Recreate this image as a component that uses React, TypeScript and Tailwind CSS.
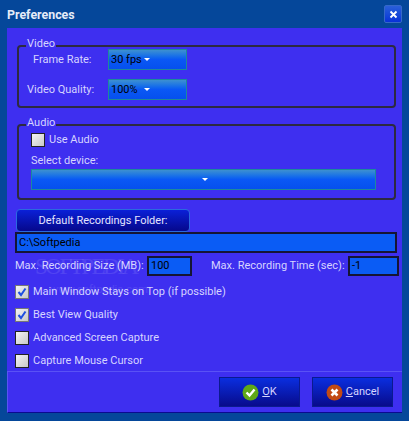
const labelFont = "[font-family:Roboto,'Liberation_Sans',sans-serif] text-[11px] leading-[14px]";

function Group({ title, className, children }: { title: string; className: string; children: React.ReactNode }) {
  return (
    <div className={`relative ml-[10px] w-[379px] rounded-[4px] border-2 border-[#2d2a40] ${className}`}>
      <span className="absolute left-[7px] top-[-10px] bg-[#3e2ff0] px-[1px] text-[#d6d4ff]">{title}</span>
      {children}
    </div>
  );
}

function Combo({ value, className }: { value?: string; className: string }) {
  return (
    <div className={`flex h-[21px] items-center border border-[#1c8a9c] bg-gradient-to-b from-[#3d8fd0] via-[#0a58f5] to-[#0550ee] pl-[2px] text-black ${className}`}>
      {value && <span className="w-[33px]">{value}</span>}
      <span className="h-0 w-0 border-x-[3px] border-t-[3px] border-x-transparent border-t-white" />
    </div>
  );
}

function Check({ checked, label }: { checked?: boolean; label: string }) {
  return (
    <div className="flex h-[14px] items-center gap-[4px] text-[#d6d4ff]">
      <span className={`flex h-[14px] w-[14px] items-center justify-center border bg-gradient-to-br from-[#f4f4f4] to-[#c8c8c8] ${checked ? "border-[#777]" : "border-[#222]"}`}>
        {checked && (
          <svg width="10" height="10" viewBox="0 0 10 10">
            <path d="M1.5 5 L4 8 L8.5 1.5" fill="none" stroke="#1e4fe0" strokeWidth="2" />
          </svg>
        )}
      </span>
      <span>{label}</span>
    </div>
  );
}

function DialogButton({ label, rest, icon }: { label: string; rest: string; icon: React.ReactNode }) {
  return (
    <div className="flex h-[30px] w-[81px] items-center justify-center gap-[3px] border border-[#0a1a90] bg-gradient-to-b from-[#0a2ee0] to-[#080a8c] text-[#d6d4ff]">
      {icon}
      <span><span className="underline">{label}</span>{rest}</span>
    </div>
  );
}

export default function App() {
  return (
    <div className={`relative flex h-[421px] w-[409px] flex-col overflow-hidden bg-[#05479a] ${labelFont}`}>
      <div className="flex h-[28px] shrink-0 items-center justify-between pl-[7px] pr-[7px]">
        <span className="pt-[2px] text-[12.4px] font-bold text-[#e4ecf8]">Preferences</span>
        <div className="flex h-[18px] w-[18px] items-center justify-center rounded-[2px] border border-[#3568c8] bg-gradient-to-b from-[#2a5fd8] to-[#0a30d8]">
          <svg width="9" height="9" viewBox="0 0 9 9">
            <path d="M1.5 1.5 L7.5 7.5 M7.5 1.5 L1.5 7.5" stroke="#fff" strokeWidth="1.8" />
          </svg>
        </div>
      </div>

      <div className="mx-[7px] flex h-[385px] w-[395px] flex-col bg-[#3e2ff0] pt-[17px]">
        <Group title="Video" className="h-[63px]">
          <div className="mt-[2px] flex h-[21px] items-center">
            <span className="ml-[14px] w-[75px] text-[#d6d4ff]">Frame Rate:</span>
            <Combo value="30 fps" className="w-[79px]" />
          </div>
          <div className="mt-[9px] flex h-[21px] items-center">
            <span className="ml-[8px] w-[81px] text-[#d6d4ff]">Video Quality:</span>
            <Combo value="100%" className="w-[79px]" />
          </div>
        </Group>

        <Group title="Audio" className="mt-[16px] h-[76px]">
          <div className="ml-[12px] mt-[7px]">
            <Check label="Use Audio" />
          </div>
          <div className="ml-[12px] mt-[7px] text-[#d6d4ff]">Select device:</div>
          <div className="ml-[12px] mt-[1px]">
            <Combo className="w-[345px] justify-center" />
          </div>
        </Group>

        <div className="ml-[9px] mt-[9px] flex h-[23px] w-[174px] items-center justify-center rounded-[4px] border border-[#2a6ae0] bg-gradient-to-b from-[#0a20d8] to-[#06088c] text-[#e4e4ff]">
          Default Recordings Folder:
        </div>

        <div className="ml-[8px] flex h-[21px] w-[382px] items-center border-2 border-[#151535] bg-[#0a5cf5] pl-[2px] text-black">
          C:\Softpedia
        </div>

        <div className="mt-[3px] flex h-[20px] items-center whitespace-nowrap pl-[8px] text-[#d6d4ff]">
          <span className="w-[132px]">Max. Recording Size (MB):</span>
          <div className="flex h-[20px] w-[45px] items-center border-2 border-[#151535] bg-[#0a5cf5] pl-[2px] text-black">100</div>
          <span className="ml-[19px] w-[137px]">Max. Recording Time (sec):</span>
          <div className="flex h-[20px] w-[51px] items-center border-2 border-[#151535] bg-[#0a5cf5] pl-[2px] text-black">-1</div>
        </div>

        <div className="ml-[8px] mt-[9px] flex flex-col gap-[9px]">
          <Check checked label="Main Window Stays on Top (if possible)" />
          <Check checked label="Best View Quality" />
          <Check label="Advanced Screen Capture" />
          <Check label="Capture Mouse Cursor" />
        </div>

        <div className="mt-[3px] flex flex-1 justify-end gap-[12px] border-t border-l border-b border-t-[#5a52f5] border-l-[#5a52f5] border-b-[#0a0a90] pr-[9px] pt-[5px]">
          <DialogButton
            label="O"
            rest="K"
            icon={
              <svg width="17" height="17" viewBox="0 0 17 17">
                <circle cx="8.5" cy="8.5" r="8" fill="#5fa818" />
                <path d="M4.5 8.5 L7.5 11.5 L12.5 5.5" fill="none" stroke="#fff" strokeWidth="2.4" />
              </svg>
            }
          />
          <DialogButton
            label="C"
            rest="ancel"
            icon={
              <svg width="17" height="17" viewBox="0 0 17 17">
                <circle cx="8.5" cy="8.5" r="8" fill="#c24a14" />
                <path d="M5.5 5.5 L11.5 11.5 M11.5 5.5 L5.5 11.5" stroke="#fff" strokeWidth="2.6" />
              </svg>
            }
          />
        </div>
      </div>

      <span className="pointer-events-none absolute left-[35px] top-[253px] text-[23px] leading-[28px] tracking-[-2.5px] text-white/10 [font-family:'Liberation_Serif',serif]">SOFTPEDIA</span>
      <span className="pointer-events-none absolute left-[50px] top-[283px] text-white/10">www.softpedia.com</span>
    </div>
  );
}
